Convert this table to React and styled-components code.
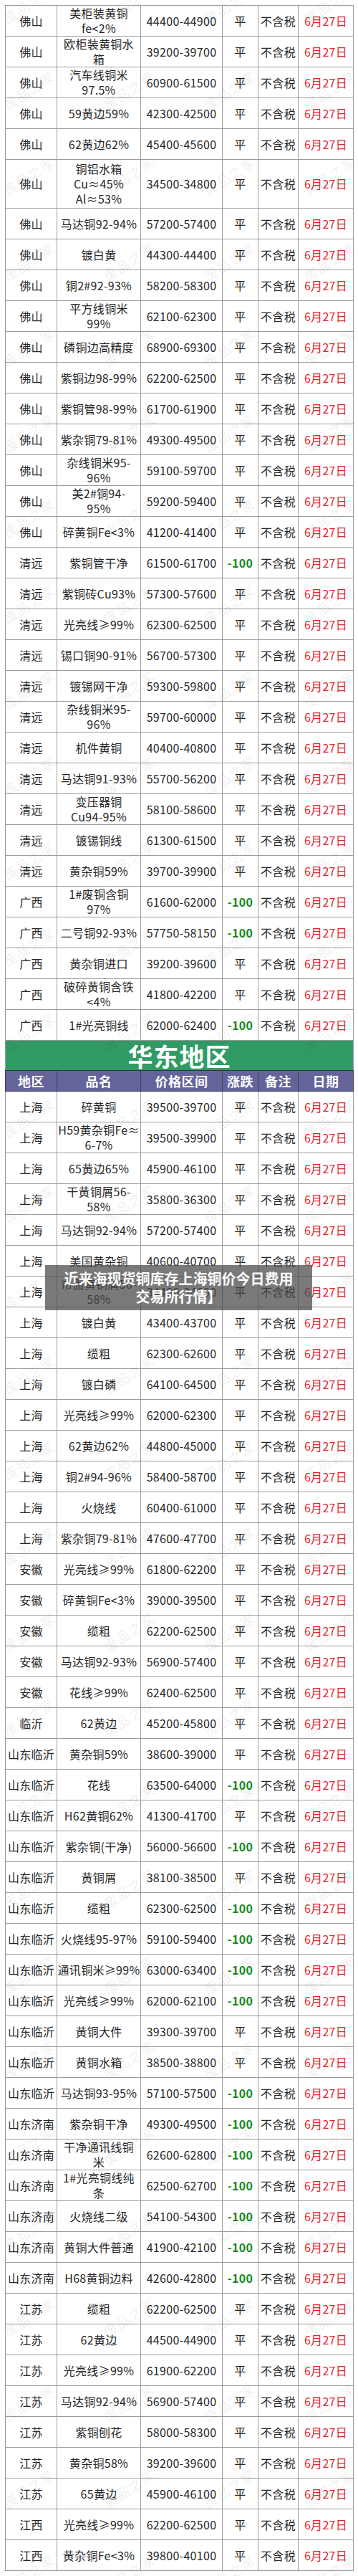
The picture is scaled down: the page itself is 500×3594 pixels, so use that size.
import React from "react";
import styled, { createGlobalStyle } from "styled-components";

const GlobalStyle = createGlobalStyle`
  body {
    margin: 0;
    background: #ffffff;
    font-family: "Noto Sans CJK SC", "Noto Sans", "Liberation Sans", sans-serif;
  }
`;

const Page = styled.div`
  position: relative;
  width: 500px;
  box-sizing: border-box;
  padding: 7px 7px 8px;
  overflow: hidden;
  background: #fff;
`;

const Table = styled.table`
  width: 486px;
  border-collapse: collapse;
  table-layout: fixed;
`;

const Cell = styled.td`
  height: ${(p) => (p.tall ? 67 : 42)}px;
  padding: 0;
  border: 1px solid #9c9c9c;
  text-align: center;
  vertical-align: middle;
  white-space: pre-line;
  font-size: 16px;
  line-height: 21px;
  letter-spacing: 0.3px;
  color: ${(p) => (p.red ? "#e3262d" : p.down ? "#16881c" : "#262626")};
  font-weight: ${(p) => (p.down ? 700 : 400)};
`;

const TitleCell = styled.td`
  height: 41px;
  padding: 0;
  background: #319b65;
  border: 1px solid #9c9c9c;
  border-bottom: 1px solid #2c3a33;
  color: #fff;
  font-size: 35px;
  font-weight: 700;
  letter-spacing: 1px;
  text-align: center;
  line-height: 41px;
`;

const HeadCell = styled.th`
  height: 28px;
  padding: 0;
  background: #64649a;
  border: 1px solid #3e3e55;
  color: #fff;
  font-size: 18px;
  font-weight: 700;
  line-height: 28px;
  text-align: center;
  letter-spacing: 0.5px;
`;

const WatermarkLayer = styled.div`
  position: absolute;
  left: -30px;
  top: -54px;
  width: 560px;
  display: grid;
  grid-template-columns: repeat(4, 140px);
  grid-auto-rows: 119.5px;
  pointer-events: none;
`;

const Mark = styled.span`
  display: flex;
  align-items: center;
  justify-content: center;
  font-size: 19px;
  color: rgba(0, 0, 0, 0.075);
  letter-spacing: 1px;
  transform: rotate(-33deg);
  white-space: nowrap;
`;

const Caption = styled.div`
  position: absolute;
  left: 63px;
  top: 1765px;
  width: 373px;
  height: 63px;
  box-sizing: border-box;
  padding: 6px 4px;
  background: rgba(70, 70, 70, 0.72);
  color: #fff;
  font-size: 20px;
  font-weight: 700;
  line-height: 25px;
  text-align: center;
`;

const west = [
  ["佛山", "美柜装黄铜\nfe<2%", "44400-44900"],
  ["佛山", "欧柜装黄铜水\n箱", "39200-39700"],
  ["佛山", "汽车线铜米\n97.5%", "60900-61500"],
  ["佛山", "59黄边59%", "42300-42500"],
  ["佛山", "62黄边62%", "45400-45600"],
  ["佛山", "铜铝水箱\nCu≈45%\nAl≈53%", "34500-34800", "平", true],
  ["佛山", "马达铜92-94%", "57200-57400"],
  ["佛山", "镀白黄", "44300-44400"],
  ["佛山", "铜2#92-93%", "58200-58300"],
  ["佛山", "平方线铜米\n99%", "62100-62300"],
  ["佛山", "磷铜边高精度", "68900-69300"],
  ["佛山", "紫铜边98-99%", "62200-62500"],
  ["佛山", "紫铜管98-99%", "61700-61900"],
  ["佛山", "紫杂铜79-81%", "49300-49500"],
  ["佛山", "杂线铜米95-\n96%", "59100-59700"],
  ["佛山", "美2#铜94-\n95%", "59200-59400"],
  ["佛山", "碎黄铜Fe<3%", "41200-41400"],
  ["清远", "紫铜管干净", "61500-61700", "-100"],
  ["清远", "紫铜砖Cu93%", "57300-57600"],
  ["清远", "光亮线≥99%", "62300-62500"],
  ["清远", "锡口铜90-91%", "56700-57300"],
  ["清远", "镀锡网干净", "59300-59800"],
  ["清远", "杂线铜米95-\n96%", "59700-60000"],
  ["清远", "机件黄铜", "40400-40800"],
  ["清远", "马达铜91-93%", "55700-56200"],
  ["清远", "变压器铜\nCu94-95%", "58100-58600"],
  ["清远", "镀锡铜线", "61300-61500"],
  ["清远", "黄杂铜59%", "39700-39900"],
  ["广西", "1#废铜含铜\n97%", "61600-62000", "-100"],
  ["广西", "二号铜92-93%", "57750-58150", "-100"],
  ["广西", "黄杂铜进口", "39200-39600"],
  ["广西", "破碎黄铜含铁\n<4%", "41800-42200"],
  ["广西", "1#光亮铜线", "62000-62400", "-100"],
];

const east = [
  ["上海", "碎黄铜", "39500-39700"],
  ["上海", "H59黄杂铜Fe≈\n6-7%", "39500-39900"],
  ["上海", "65黄边65%", "45900-46100"],
  ["上海", "干黄铜屑56-\n58%", "35800-36300"],
  ["上海", "马达铜92-94%", "57200-57400"],
  ["上海", "美国黄杂铜", "40600-40700"],
  ["上海", "市面黄铜屑56-\n58%", "34400-34600"],
  ["上海", "镀白黄", "43400-43700"],
  ["上海", "缆粗", "62300-62600"],
  ["上海", "镀白磷", "64100-64500"],
  ["上海", "光亮线≥99%", "62000-62300"],
  ["上海", "62黄边62%", "44800-45000"],
  ["上海", "铜2#94-96%", "58400-58700"],
  ["上海", "火烧线", "60400-61000"],
  ["上海", "紫杂铜79-81%", "47600-47700"],
  ["安徽", "光亮线≥99%", "61800-62200"],
  ["安徽", "碎黄铜Fe<3%", "39000-39500"],
  ["安徽", "缆粗", "62200-62500"],
  ["安徽", "马达铜92-93%", "56900-57400"],
  ["安徽", "花线≥99%", "62400-62500"],
  ["临沂", "62黄边", "45200-45800"],
  ["山东临沂", "黄杂铜59%", "38600-39000"],
  ["山东临沂", "花线", "63500-64000", "-100"],
  ["山东临沂", "H62黄铜62%", "41300-41700"],
  ["山东临沂", "紫杂铜(干净)", "56000-56600", "-100"],
  ["山东临沂", "黄铜屑", "38100-38500"],
  ["山东临沂", "缆粗", "62300-62500", "-100"],
  ["山东临沂", "火烧线95-97%", "59100-59400", "-100"],
  ["山东临沂", "通讯铜米≥99%", "63000-63400", "-100"],
  ["山东临沂", "光亮线≥99%", "62000-62100", "-100"],
  ["山东临沂", "黄铜大件", "39300-39700"],
  ["山东临沂", "黄铜水箱", "38500-38800"],
  ["山东临沂", "马达铜93-95%", "57100-57500", "-100"],
  ["山东济南", "紫杂铜干净", "49300-49500", "-100"],
  ["山东济南", "干净通讯线铜\n米", "62600-62800", "-100"],
  ["山东济南", "1#光亮铜线纯\n条", "62500-62700", "-100"],
  ["山东济南", "火烧线二级", "54100-54300", "-100"],
  ["山东济南", "黄铜大件普通", "41900-42100", "-100"],
  ["山东济南", "H68黄铜边料", "42600-42800", "-100"],
  ["江苏", "缆粗", "62200-62500"],
  ["江苏", "62黄边", "44500-44900"],
  ["江苏", "光亮线≥99%", "61900-62200"],
  ["江苏", "马达铜92-94%", "56900-57400"],
  ["江苏", "紫铜刨花", "58000-58300"],
  ["江苏", "黄杂铜58%", "39200-39600"],
  ["江苏", "65黄边", "45900-46100"],
  ["江西", "光亮线≥99%", "62200-62500"],
  ["江西", "黄杂铜Fe<3%", "39800-40100"],
];

const heads = ["地区", "品名", "价格区间", "涨跌", "备注", "日期"];

function PriceRow({ row }) {
  const [area, name, price, change = "平", tall] = row;
  const down = change !== "平";
  return (
    <tr>
      <Cell tall={tall}>{area}</Cell>
      <Cell tall={tall}>{name}</Cell>
      <Cell tall={tall}>{price}</Cell>
      <Cell tall={tall} down={down}>
        {change}
      </Cell>
      <Cell tall={tall}>不含税</Cell>
      <Cell tall={tall} red>
        6月27日
      </Cell>
    </tr>
  );
}

export default function App() {
  const marks = Array.from({ length: 31 * 4 });
  return (
    <Page>
      <GlobalStyle />
      <Table>
        <colgroup>
          <col style={{ width: 72 }} />
          <col style={{ width: 117 }} />
          <col style={{ width: 114 }} />
          <col style={{ width: 50 }} />
          <col style={{ width: 56 }} />
          <col style={{ width: 77 }} />
        </colgroup>
        <tbody>
          {west.map((r, i) => (
            <PriceRow key={"w" + i} row={r} />
          ))}
          <tr>
            <TitleCell colSpan={6}>华东地区</TitleCell>
          </tr>
          <tr>
            {heads.map((h) => (
              <HeadCell key={h}>{h}</HeadCell>
            ))}
          </tr>
          {east.map((r, i) => (
            <PriceRow key={"e" + i} row={r} />
          ))}
        </tbody>
      </Table>
      <WatermarkLayer>
        {marks.map((_, i) => (
          <Mark key={i}>废品之家</Mark>
        ))}
      </WatermarkLayer>
      <Caption>
        近来海现货铜库存上海铜价今日费用
        <br />
        交易所行情】
      </Caption>
    </Page>
  );
}
